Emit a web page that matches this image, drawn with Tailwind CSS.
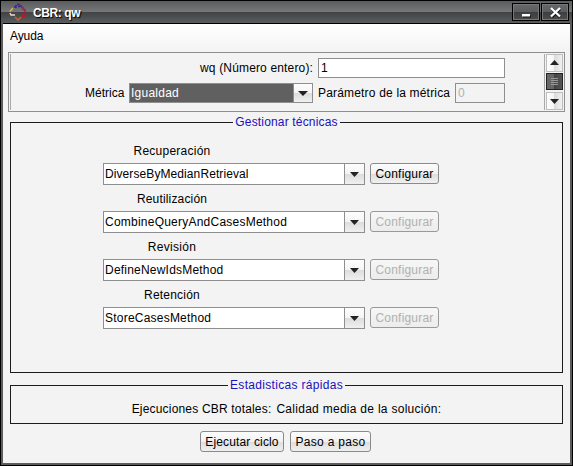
<!DOCTYPE html>
<html lang="es">
<head>
<meta charset="utf-8">
<title>CBR: qw</title>
<script src="https://cdn.jsdelivr.net/npm/@tailwindcss/browser@4"></script>
</head>
<body class="w-[573px] h-[466px] overflow-hidden bg-black p-px font-['Liberation_Sans',Arial,sans-serif] text-[12px] leading-[14px] text-black">
<div class="flex h-[464px] w-[571px] flex-col whitespace-nowrap bg-[#5c5c5c] px-[2px] pb-[2px]">
  <header class="-mx-[2px] flex h-[22px] shrink-0 items-center bg-[linear-gradient(180deg,#5a5b5d_0,#77787a_11px,#414244_11px,#5c5d5f_22px)] pl-[8px] pr-[3px]">
    <svg class="h-[18px] w-[18px] shrink-0" viewBox="0 0 18 18" fill="none" stroke-width="1.2">
      <path d="M5 4h2V2M8 1.5h3M9 3.5h2M12 2v2" stroke="#3a2594" stroke-width="1.6"/>
      <path d="M12 4.5h2v2h2v3h1" stroke="#9c2348" stroke-width="1.4"/>
      <path d="M17 10l-1 3h-3v-2" stroke="#b8182c" stroke-width="1.8"/>
      <path d="M12 14l-3 3-3-3" stroke="#d5602c" stroke-width="1.5"/>
      <path d="M4 5L0.8 8.5" stroke="#e3b34c" stroke-width="1.5"/>
      <path d="M1 10l1 2h4" stroke="#f0d8d0" stroke-width="1.4"/>
    </svg>
    <h1 class="ml-[6px] mt-[2px] font-bold tracking-[-0.4px] text-white [text-shadow:1px_1px_1px_#000]">CBR: qw</h1>
    <div class="ml-auto flex gap-px">
      <button aria-label="Minimizar" class="h-[18px] w-[28px] border border-black bg-[linear-gradient(180deg,#66676a_0,#5c5d5f_8px,#3c3d3f_8px,#4c4d4f_16px)] shadow-[inset_0_0_0_1px_#77787a]"><svg width="26" height="16"><path d="M10 11.5h8v2h-8z" fill="#111"/><path d="M9 10h8v2.5H9z" fill="#fff"/></svg></button>
      <button aria-label="Cerrar" class="h-[18px] w-[28px] border border-black bg-[linear-gradient(180deg,#66676a_0,#5c5d5f_8px,#3c3d3f_8px,#4c4d4f_16px)] shadow-[inset_0_0_0_1px_#77787a]"><svg width="26" height="16"><path d="M10 5l8 8M18 5l-8 8" stroke="#111" stroke-width="2.8"/><path d="M9 4l9 8.500M18 4l-9 8.500" stroke="#fff" stroke-width="2.3"/></svg></button>
    </div>
  </header>
  <main class="flex grow flex-col border-t border-black bg-[#f3f3f3]">
    <nav class="h-[28px] shrink-0 bg-linear-to-b from-white to-[#f3f3f3] px-[7px] pt-[5px] tracking-[-0.1px]">Ayuda</nav>

    <section class="mx-[5px] flex h-[60px] shrink-0 border border-[#8f8f8f] p-px">
      <div class="flex h-[56px] w-[535px] shrink-0 flex-col gap-[5px] border-x border-[#a9a9a9] pt-[4px]">
        <div class="flex h-[20px] items-center pl-[189px]">
          <label class="w-[118px] shrink-0 tracking-[0.16px]">wq (Número entero):</label>
          <div class="flex h-[20px] w-[187px] items-center border border-[#8f8f8f] bg-white pl-[2px]">1</div>
        </div>
        <div class="flex h-[20px] items-center pl-[74px]">
          <label class="w-[44px] shrink-0">Métrica</label>
          <div class="flex h-[20px] w-[184px] border border-[#8f8f8f] bg-[#606060] text-white">
            <div class="flex flex-1 items-center pl-[1px] tracking-[0.24px]">Igualdad</div>
            <div class="w-[19px] border-l border-[#8f8f8f] bg-[linear-gradient(180deg,#fdfdfd_0,#f4f4f4_50%,#dcdcdc_50%,#f0f0f0_100%)]"><svg width="18" height="18"><path d="M4 7h10l-5 5z" fill="#222"/></svg></div>
          </div>
          <label class="ml-[5px] w-[137px] shrink-0 tracking-[0.18px]">Parámetro de la métrica</label>
          <div class="flex h-[20px] w-[50px] items-center border border-[#8f8f8f] bg-[#f3f3f3] pl-[2px] text-[#b0b0b0]">0</div>
        </div>
      </div>
      <div class="ml-px flex w-[17px] flex-col gap-px">
        <div class="h-[18px] border border-[#bdbdbd] bg-[linear-gradient(90deg,#fdfdfd_0,#f4f4f4_50%,#dcdcdc_50%,#f0f0f0_100%)]"><svg width="15" height="16"><path d="M3 10h9l-4.500-5z" fill="#222"/></svg></div>
        <div class="h-[17px] border border-[#222] bg-[linear-gradient(90deg,#686868_0,#646464_50%,#444_50%,#555_100%)]"><svg width="15" height="15"><path d="M4 4.500h7M4 6.500h7M4 8.500h7M4 10.500h7" stroke="#999"/></svg></div>
        <div class="mt-px h-[18px] border border-[#bdbdbd] bg-[linear-gradient(90deg,#fdfdfd_0,#f4f4f4_50%,#dcdcdc_50%,#f0f0f0_100%)]"><svg width="15" height="16"><path d="M3 6h9l-4.500 5z" fill="#222"/></svg></div>
      </div>
    </section>

    <fieldset class="mx-[7px] mt-[3px] h-[258px] shrink-0 border border-[#1c1c1c]">
      <legend class="mx-auto px-[2px] leading-[15px] tracking-[0.16px] text-[#1a10c0]">Gestionar técnicas</legend>
      <div class="flex flex-col gap-[7px] pl-[92px] pt-[14px]">
        <div>
          <div class="mb-[5px] w-[138px] text-center tracking-[0.24px]">Recuperación</div>
          <div class="flex gap-[5px]">
            <div class="flex h-[22px] w-[262px] border border-[#8f8f8f] bg-white"><div class="flex flex-1 items-center pl-[1px] tracking-[0.09px]">DiverseByMedianRetrieval</div><div class="w-[20px] border-l border-[#8f8f8f] bg-[linear-gradient(180deg,#fdfdfd_0,#f4f4f4_50%,#dcdcdc_50%,#f0f0f0_100%)]"><svg width="19" height="20"><path d="M5 8h9l-4.500 5z" fill="#222"/></svg></div></div>
            <button class="h-[21px] w-[69px] rounded-[3px] border border-[#8a8a8a] bg-[linear-gradient(180deg,#fdfdfd_0,#f1f1f1_50%,#dcdcdc_50%,#f0f0f0_100%)] tracking-[0.2px]">Configurar</button>
          </div>
        </div>
        <div>
          <div class="mb-[5px] w-[138px] text-center tracking-[0.16px]">Reutilización</div>
          <div class="flex gap-[5px]">
            <div class="flex h-[22px] w-[262px] border border-[#8f8f8f] bg-white"><div class="flex flex-1 items-center pl-[1px] tracking-[0.23px]">CombineQueryAndCasesMethod</div><div class="w-[20px] border-l border-[#8f8f8f] bg-[linear-gradient(180deg,#fdfdfd_0,#f4f4f4_50%,#dcdcdc_50%,#f0f0f0_100%)]"><svg width="19" height="20"><path d="M5 8h9l-4.500 5z" fill="#222"/></svg></div></div>
            <button disabled class="h-[21px] w-[69px] rounded-[3px] border border-[#999] bg-linear-to-b from-[#f7f7f7] to-[#ececec] tracking-[0.2px] text-[#b0b0b0]">Configurar</button>
          </div>
        </div>
        <div>
          <div class="mb-[5px] w-[138px] text-center tracking-[0.28px]">Revisión</div>
          <div class="flex gap-[5px]">
            <div class="flex h-[22px] w-[262px] border border-[#8f8f8f] bg-white"><div class="flex flex-1 items-center pl-[1px] tracking-[0.21px]">DefineNewIdsMethod</div><div class="w-[20px] border-l border-[#8f8f8f] bg-[linear-gradient(180deg,#fdfdfd_0,#f4f4f4_50%,#dcdcdc_50%,#f0f0f0_100%)]"><svg width="19" height="20"><path d="M5 8h9l-4.500 5z" fill="#222"/></svg></div></div>
            <button disabled class="h-[21px] w-[69px] rounded-[3px] border border-[#999] bg-linear-to-b from-[#f7f7f7] to-[#ececec] tracking-[0.2px] text-[#b0b0b0]">Configurar</button>
          </div>
        </div>
        <div>
          <div class="mb-[5px] w-[138px] text-center tracking-[0.2px]">Retención</div>
          <div class="flex gap-[5px]">
            <div class="flex h-[22px] w-[262px] border border-[#8f8f8f] bg-white"><div class="flex flex-1 items-center pl-[1px] tracking-[0.22px]">StoreCasesMethod</div><div class="w-[20px] border-l border-[#8f8f8f] bg-[linear-gradient(180deg,#fdfdfd_0,#f4f4f4_50%,#dcdcdc_50%,#f0f0f0_100%)]"><svg width="19" height="20"><path d="M5 8h9l-4.500 5z" fill="#222"/></svg></div></div>
            <button disabled class="h-[21px] w-[69px] rounded-[3px] border border-[#999] bg-linear-to-b from-[#f7f7f7] to-[#ececec] tracking-[0.2px] text-[#b0b0b0]">Configurar</button>
          </div>
        </div>
      </div>
    </fieldset>

    <fieldset class="mx-[7px] mt-[5px] h-[46px] shrink-0 border border-[#1c1c1c]">
      <legend class="mx-auto px-[2px] leading-[15px] tracking-[0.31px] text-[#1a10c0]">Estadisticas rápidas</legend>
      <div class="flex justify-center gap-[5px] pt-[9px]">
        <span class="tracking-[0.18px]">Ejecuciones CBR totales:</span>
        <span class="tracking-[0.28px]">Calidad media de la solución:</span>
      </div>
    </fieldset>

    <footer class="mt-[7px] flex gap-[6px] pl-[197px]">
      <button class="h-[21px] w-[84px] rounded-[3px] border border-[#8a8a8a] bg-[linear-gradient(180deg,#fdfdfd_0,#f1f1f1_50%,#dcdcdc_50%,#f0f0f0_100%)] tracking-[0.14px]">Ejecutar ciclo</button>
      <button class="h-[21px] w-[81px] rounded-[3px] border border-[#8a8a8a] bg-[linear-gradient(180deg,#fdfdfd_0,#f1f1f1_50%,#dcdcdc_50%,#f0f0f0_100%)] tracking-[0.3px]">Paso a paso</button>
    </footer>
  </main>
</div>
</body>
</html>
